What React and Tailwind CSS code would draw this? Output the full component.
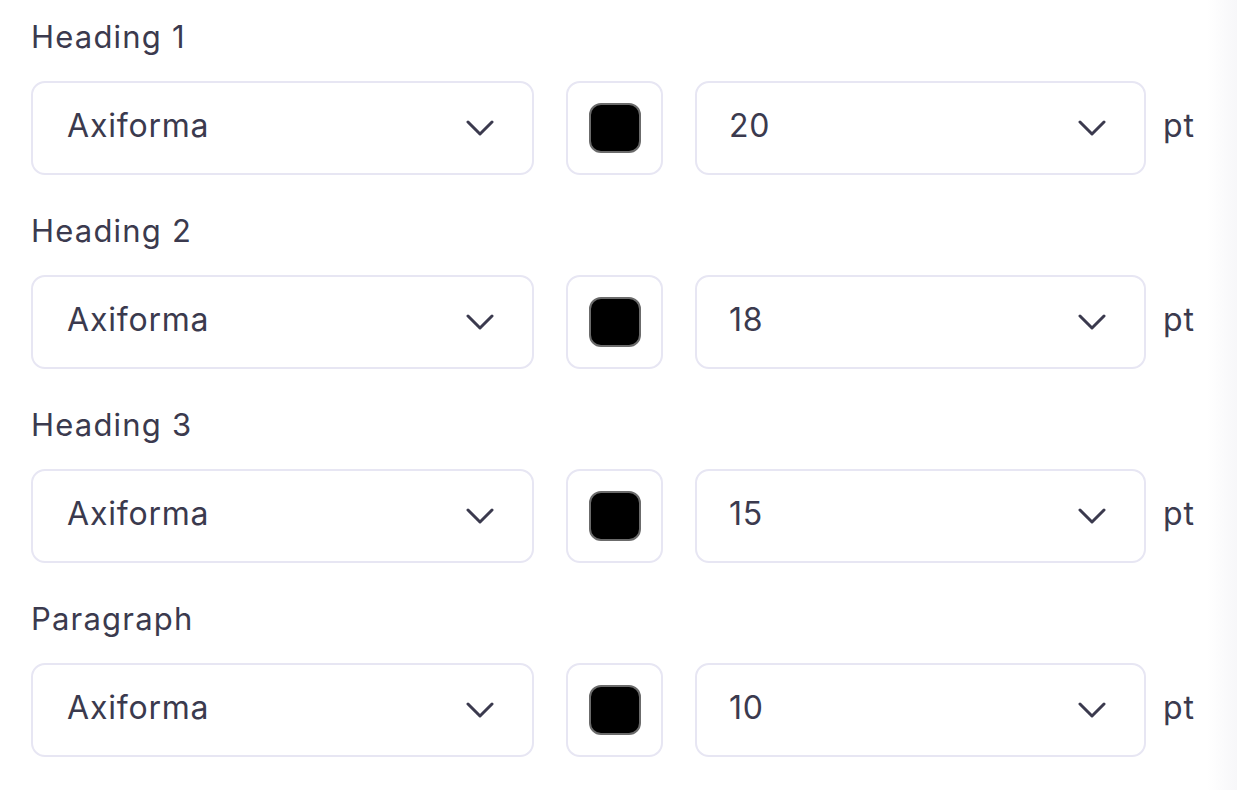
import React from 'react';

const rows = [
  { label: 'Heading 1', size: '20' },
  { label: 'Heading 2', size: '18' },
  { label: 'Heading 3', size: '15' },
  { label: 'Paragraph', size: '10' },
];

// chevron drawn to match the thin rounded caret in the reference
function Chevron() {
  return (
    <svg width="28" height="16" viewBox="0 0 28 16" fill="none">
      <path d="M2 2l12 12L26 2" stroke="#3b3a4e" strokeWidth="3" strokeLinecap="round" strokeLinejoin="round" />
    </svg>
  );
}

function Select({ value, className }) {
  return (
    <div className={`h-[94px] flex items-center justify-between rounded-[14px] border-2 border-[#e7e6f3] bg-white ${className}`}>
      <span className="text-[32px] leading-[36px] tracking-[0.8px] text-[#3b3a4e] -mt-[4px]">{value}</span>
      <Chevron />
    </div>
  );
}

export default function App() {
  return (
    <div
      className="relative w-[1237px] h-[790px] bg-white overflow-hidden"
      style={{ fontFamily: 'Inter, "Noto Sans", sans-serif' }}
    >
      <div className="flex flex-col gap-[38px] pl-[31px] pt-[19px]">
        {rows.map((row) => (
          <div key={row.label} className="flex flex-col gap-[26px]">
            <div className="text-[31px] leading-[36px] tracking-[1.2px] text-[#3b3a4e]">{row.label}</div>
            <div className="flex items-center">
              <Select value="Axiforma" className="w-[503px] pl-[34px] pr-[38px]" />
              <div className="ml-[32px] w-[97px] h-[94px] flex items-center justify-center rounded-[14px] border-2 border-[#e7e6f3]">
                <div className="w-[52px] h-[50px] rounded-[12px] bg-black border-2 border-[#6b6b6b]" />
              </div>
              <Select value={row.size} className="ml-[32px] w-[451px] pl-[32px] pr-[38px]" />
              <span className="ml-[17px] -mt-[4px] text-[32px] tracking-[0.8px] text-[#3b3a4e]">pt</span>
            </div>
          </div>
        ))}
      </div>
      <div className="absolute top-0 right-0 w-[30px] h-full bg-gradient-to-r from-white to-[#f7f7f9]" />
    </div>
  );
}
